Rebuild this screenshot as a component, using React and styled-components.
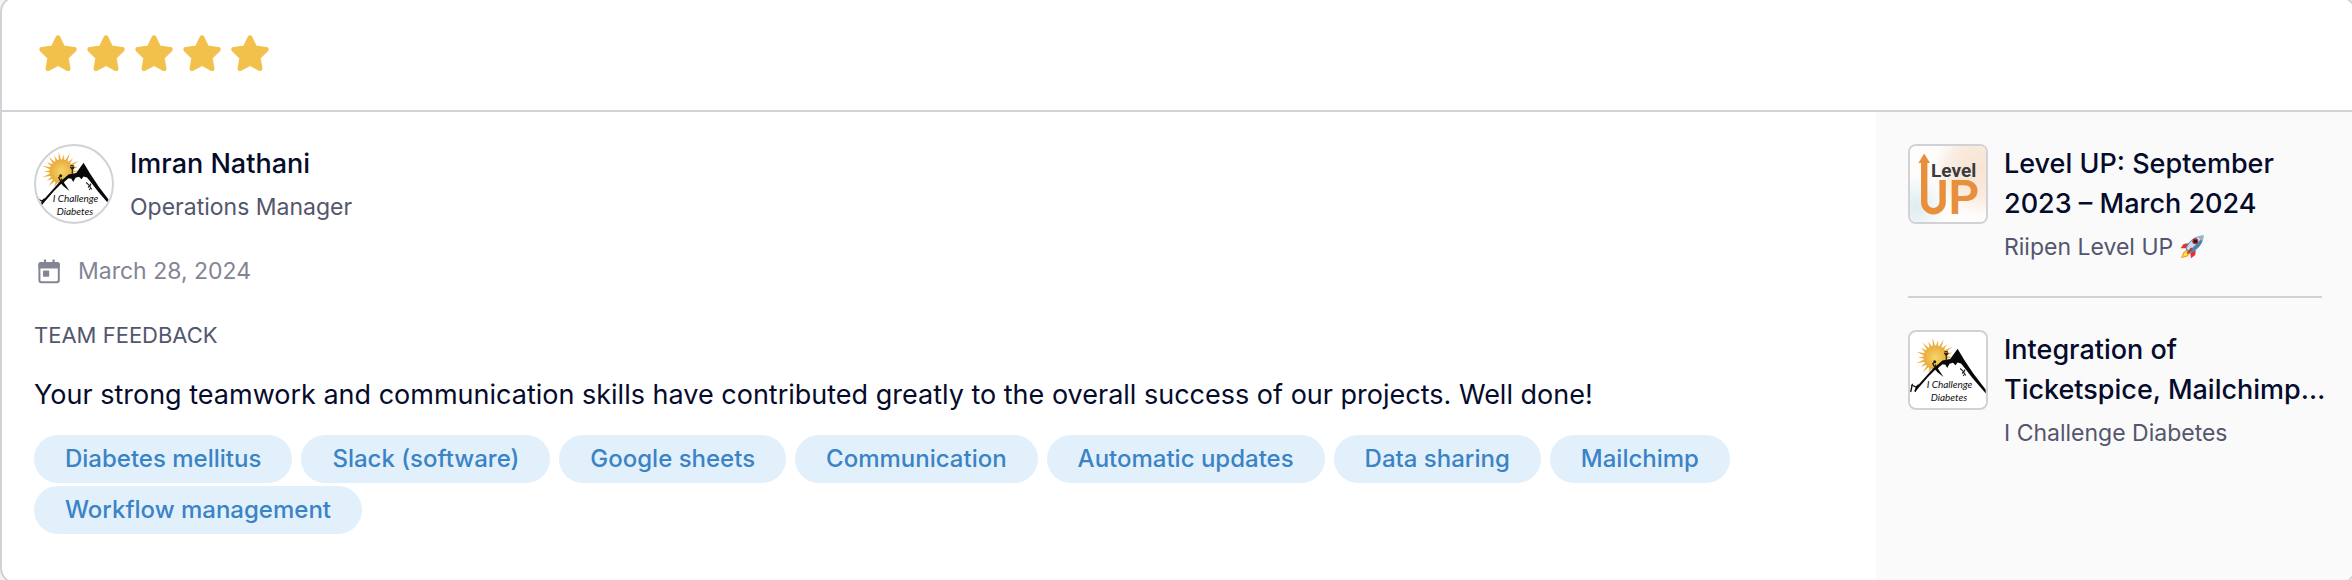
import React from 'react';
import styled, { createGlobalStyle, ThemeProvider } from 'styled-components';

const theme = {
  ink: '#050b2b',
  muted: '#53566c',
  faint: '#838595',
  line: '#d1d1d8',
  panel: '#fafafa',
  star: '#f2c14c',
  chip: '#e2f0fc',
  chipText: '#3a83c5',
};

const GlobalStyle = createGlobalStyle`
  *, *::before, *::after { box-sizing: border-box; }
  body {
    margin: 0;
    background: #f3f3f4;
    color: ${theme.ink};
    font-family: Inter, "Liberation Sans", sans-serif;
    font-size: 27px;
    line-height: 40px;
  }
  h2, h3, p, ul { margin: 0; padding: 0; font-size: inherit; }
`;

const Page = styled.div`
  display: flex;
  flex-direction: column;
  min-height: 100vh;
  overflow: hidden;
`;

const Card = styled.article`
  flex: 1;
  display: flex;
  flex-direction: column;
  margin: -4px -4px -4px 0;
  background: #fff;
  border: 2px solid ${(p) => p.theme.line};
  border-radius: 16px;
  overflow: hidden;
`;

const Header = styled.header`
  display: flex;
  padding: 32px;
  border-bottom: 2px solid ${(p) => p.theme.line};
`;

const Rating = styled.div`
  display: flex;
  height: 48px;
  color: ${(p) => p.theme.star};
`;

const Columns = styled.div`
  flex: 1;
  display: flex;
`;

const Main = styled.section`
  flex: 1;
  min-width: 0;
  display: flex;
  flex-direction: column;
  gap: 20px;
  padding: 32px 32px 48px;
`;

const Details = styled.div`
  display: flex;
  flex-direction: column;
  gap: 24px;
`;

const Sidebar = styled.aside`
  flex: 0 0 478px;
  min-width: 0;
  padding: 0 32px;
  background: ${(p) => p.theme.panel};
`;

const Entry = styled.section`
  display: flex;
  align-items: flex-start;
  gap: 16px;
`;

const SideEntry = styled(Entry)`
  padding: 32px 0 29px;
  & + & { border-top: 2px solid ${(p) => p.theme.line}; }
`;

const Thumb = styled.div`
  flex: none;
  width: 80px;
  height: 80px;
  border: 2px solid ${(p) => p.theme.line};
  border-radius: ${(p) => (p.$round ? '50%' : '8px')};
  background: #fff;
  overflow: hidden;
  svg { display: block; width: 100%; height: 100%; }
`;

const EntryText = styled.div`
  min-width: 0;
  white-space: nowrap;
`;

const Title = styled.h3`
  font-weight: 500;
`;

const Subtitle = styled.p`
  display: flex;
  align-items: center;
  gap: 7px;
  margin-top: 3px;
  color: ${(p) => p.theme.muted};
  font-size: 23px;
`;

const DateRow = styled.div`
  display: flex;
  align-items: center;
  gap: 12px;
  color: ${(p) => p.theme.faint};
  font-size: 23px;
`;

const Caption = styled.h2`
  color: ${(p) => p.theme.muted};
  font-size: 22px;
  font-weight: 400;
  text-transform: uppercase;
`;

const Chips = styled.ul`
  display: flex;
  flex-wrap: wrap;
  gap: 3px 9px;
  list-style: none;
`;

const Chip = styled.li`
  padding: 0 31px;
  border-radius: 24px;
  background: ${(p) => p.theme.chip};
  color: ${(p) => p.theme.chipText};
  font-size: 24px;
  font-weight: 500;
  line-height: 48px;
`;

const Star = () => (
  <svg width="48" height="48" viewBox="0 0 48 48" aria-hidden="true">
    <path
      d="M24 7.8 28.9 18 40.2 19.5 32 27.4 34 38.6 24 33.2 14 38.6 16 27.4 7.8 19.5 19.1 18Z"
      fill="currentColor" stroke="currentColor" strokeWidth="5" strokeLinejoin="round"
    />
  </svg>
);

const CalendarIcon = () => (
  <svg width="32" height="32" viewBox="0 0 32 32" fill="none" aria-hidden="true">
    <rect x="5.4" y="8" width="19.4" height="19.2" rx="2" stroke="currentColor" strokeWidth="2" />
    <path d="M4.4 13.4V9.5A2.5 2.5 0 0 1 6.9 7h16.4a2.5 2.5 0 0 1 2.5 2.5v3.9Z" fill="currentColor" />
    <path d="M11 4.4V8M19.6 4.4V8" stroke="currentColor" strokeWidth="2.2" />
    <rect x="9" y="15.6" width="6.2" height="6.2" rx=".8" fill="currentColor" />
  </svg>
);

const RAYS = 22;
const rays = Array.from({ length: RAYS }, (_, i) => {
  const at = (turn, r) => {
    const a = (turn / RAYS) * Math.PI * 2;
    return `${(27.5 + r * Math.cos(a)).toFixed(2)} ${(27.5 + r * Math.sin(a)).toFixed(2)}`;
  };
  return `M${at(i - 0.42, 11)}L${at(i, i % 2 ? 17.5 : 20)}L${at(i + 0.42, 11)}Z`;
}).join('');

const ChallengeLogo = () => (
  <svg viewBox="2 2 76 76" role="img" aria-label="I Challenge Diabetes">
    <defs>
      <radialGradient id="sun">
        <stop offset="0" stopColor="#f5d769" />
        <stop offset="1" stopColor="#e9ab3e" />
      </radialGradient>
    </defs>
    <path d={rays} fill="#ecb042" />
    <circle cx="27.5" cy="27.5" r="12" fill="url(#sun)" />
    <path d="M13 49 26 38 36 31 49 24 62 42 66 56H12Z" fill="#fff" />
    <path
      d="M8 57.5 26.2 37.2 30.5 34 34.5 30.5 42.2 29 49.6 18.8 56 29.5 65 43 77.6 59.5 77.8 63.5 64 47.5 57.5 39 53 33.5 49.5 32.5 47.5 35.2 45 32.8 41.5 33.8 39.2 38 37.4 34.8 34.5 34.2 31.5 36.7 29.8 38.5 35.5 47 29.5 42.3 27.2 39.8 20 47 10 58.5 7.2 62 6.5 60.5Z"
      fill="#080808"
    />
    <path d="M2.7 62 4.2 55 3.2 55.8M5 55.5 8 57.3 10.5 54.8M7 61.8 8.6 57.2" fill="none" stroke="#080808" strokeWidth="1.3" />
    <path d="M38.3 30v-4.3l-2-2.8M38.3 25.7l2-3M36.6 21.7l3.3.2M26.5 37l-1.8-3.4 3-2.2M27.4 34.5v3" fill="none" stroke="#26220f" strokeWidth="1.2" />
    <circle cx="26.7" cy="31.8" r="1.5" fill="#26220f" />
    <circle cx="38.3" cy="23.8" r="1.1" fill="#26220f" />
    <path d="M52.2 38.5 55 41.2 57.8 45.5M54 43.5 56 41.5M56.3 44.5l-1.2 1.4M57 39.5l-1 2.3" fill="none" stroke="#222" strokeWidth="1.1" />
    <g fill="#111" fontFamily="Lato, sans-serif" fontStyle="italic" fontWeight="400" fontSize="10">
      <text x="41.5" y="58.4" textAnchor="middle">I Challenge</text>
      <text x="41" y="71.4" textAnchor="middle">Diabetes</text>
    </g>
  </svg>
);

const LevelUpLogo = () => (
  <svg viewBox="2 2 76 76" role="img" aria-label="Level UP">
    <defs>
      <radialGradient id="peach" cx=".92" cy=".3" r=".62">
        <stop offset="0" stopColor="#f7e3d2" />
        <stop offset=".6" stopColor="#f9ebdf" />
        <stop offset="1" stopColor="#f9ebdf" stopOpacity="0" />
      </radialGradient>
      <radialGradient id="mist" cx=".08" cy=".8" r=".42">
        <stop offset="0" stopColor="#deecef" />
        <stop offset="1" stopColor="#deecef" stopOpacity="0" />
      </radialGradient>
    </defs>
    <path d="M2 2h76v76H2Z" fill="#fefdfc" />
    <path d="M2 2h76v76H2Z" fill="url(#peach)" />
    <path d="M2 2h76v76H2Z" fill="url(#mist)" />
    <path d="M16.2 9.6 22 19H10.4Z" fill="#e88f3c" />
    <path d="M16.2 17V58a9.2 9.2 0 0 0 18.4 0V36" fill="none" stroke="#e88f3c" strokeWidth="6.4" />
    <text x="40.4" y="70.2" fill="#e88f3c" fontFamily="Roboto, sans-serif" fontWeight="600" fontSize="48">P</text>
    <text x="23" y="33.4" fill="#3b3b3d" fontFamily="Roboto, sans-serif" fontWeight="700" fontSize="19">Level</text>
  </svg>
);

const Rocket = () => (
  <svg width="24" height="24" viewBox="0 0 24 24" role="img" aria-label="rocket">
    <path d="M7 14.2 3.2 17.2 1 23.3 7.5 21.5 10.5 18Z" fill="#f9a51c" />
    <path d="M6.6 16.2 4.2 18.4 3 21.6 6.8 20.2 8.6 17.8Z" fill="#fde75a" />
    <path d="M8.6 8.2 3.6 9 .6 13.2 6 13.3ZM15.8 15.2 15.2 20 11 23.2 10.2 17.8Z" fill="#e2332d" />
    <path d="M23.5.5C17 .7 12.4 3.6 9 7.6 7.3 9.7 6 12 5.7 14.2l4 4c2.4-.5 4.6-1.8 6.6-3.6C20.3 11.2 23.4 7 23.5.5Z" fill="#4f82ad" />
    <path d="M23 1C17.3 1.3 12.9 4.2 9.9 7.8 8.3 9.7 7 11.8 6.6 13.8l1.8 1.8C13.7 12.3 19.4 7 23 1Z" fill="#c9dbe7" />
    <path d="M23.5.5c-2.2 0-4.2.4-6 1.1l4.8 4.8c.7-1.8 1.1-3.7 1.2-5.9Z" fill="#9cb4c6" />
    <circle cx="15.3" cy="6.2" r="3" fill="#c3272b" />
    <circle cx="15.3" cy="6.2" r="1.8" fill="#14202c" />
    <path d="M11 12.5 6.6 18.2 8 18.9 12.5 13.6Z" fill="#c92d2b" />
  </svg>
);

const SKILLS = [
  'Diabetes mellitus',
  'Slack (software)',
  'Google sheets',
  'Communication',
  'Automatic updates',
  'Data sharing',
  'Mailchimp',
  'Workflow management',
];

export default function App() {
  return (
    <ThemeProvider theme={theme}>
      <GlobalStyle />
      <Page>
        <Card>
          <Header>
            <Rating role="img" aria-label="5 out of 5 stars">
              {[1, 2, 3, 4, 5].map((n) => <Star key={n} />)}
            </Rating>
          </Header>
          <Columns>
            <Main>
              <Details>
                <Entry>
                  <Thumb $round><ChallengeLogo /></Thumb>
                  <EntryText>
                    <Title>Imran Nathani</Title>
                    <Subtitle>Operations Manager</Subtitle>
                  </EntryText>
                </Entry>
                <DateRow>
                  <CalendarIcon />
                  <time dateTime="2024-03-28">March 28, 2024</time>
                </DateRow>
                <Caption>Team feedback</Caption>
              </Details>
              <p>
                Your strong teamwork and communication skills have contributed greatly to the
                overall success of our projects. Well done!
              </p>
              <Chips>
                {SKILLS.map((skill) => <Chip key={skill}>{skill}</Chip>)}
              </Chips>
            </Main>
            <Sidebar>
              <SideEntry>
                <Thumb><LevelUpLogo /></Thumb>
                <EntryText>
                  <Title>Level UP: September<br />2023 – March 2024</Title>
                  <Subtitle>Riipen Level UP <Rocket /></Subtitle>
                </EntryText>
              </SideEntry>
              <SideEntry>
                <Thumb><ChallengeLogo /></Thumb>
                <EntryText>
                  <Title>Integration of<br />Ticketspice, Mailchimp…</Title>
                  <Subtitle>I Challenge Diabetes</Subtitle>
                </EntryText>
              </SideEntry>
            </Sidebar>
          </Columns>
        </Card>
      </Page>
    </ThemeProvider>
  );
}
